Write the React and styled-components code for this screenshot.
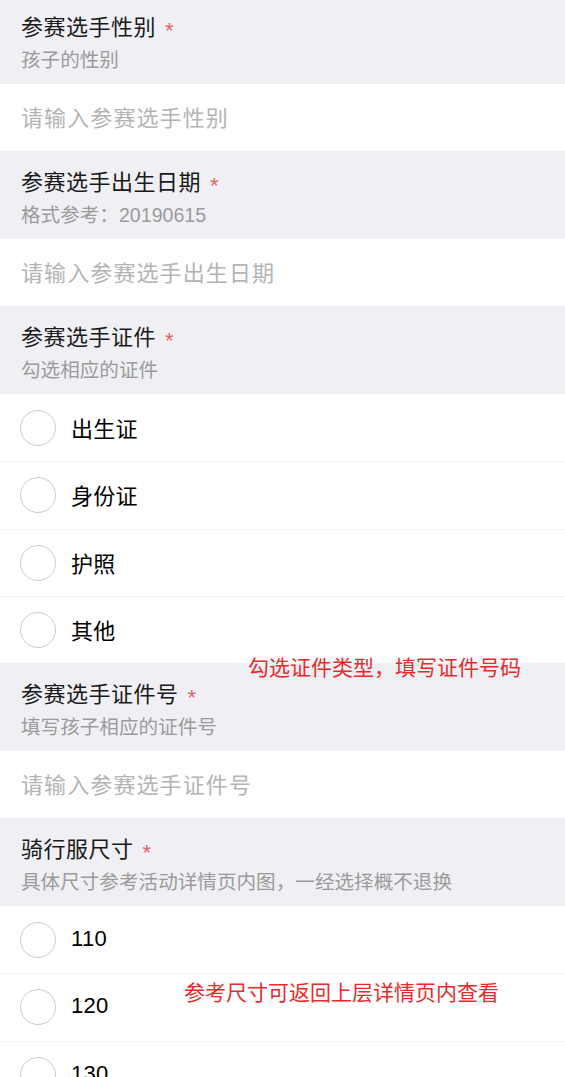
import React from "react";
import styled, { createGlobalStyle } from "styled-components";

const Global = createGlobalStyle`
  html, body {
    margin: 0;
    padding: 0;
    background: #ffffff;
    font-family: "Liberation Sans", "Noto Sans CJK SC", sans-serif;
    overflow: hidden;
  }
`;

const Page = styled.div`
  position: relative;
  width: 565px;
  margin-top: -4px;
`;

const Section = styled.div`
  position: relative;
`;

const Header = styled.div`
  background: #efeff4;
  padding: 18px 21px 12px;
  display: flex;
  flex-direction: column;
  gap: 6px;
`;

const Title = styled.div`
  font-size: 22px;
  line-height: 28px;
  letter-spacing: 0.5px;
  color: #1a1a1a;
  display: flex;
  align-items: center;
  gap: 9px;
`;

const Star = styled.span`
  color: #e06464;
  font-size: 22px;
  line-height: 22px;
  padding-top: 6px;
`;

const Sub = styled.div`
  font-size: 19.6px;
  line-height: 24px;
  color: #9b9b9b;
`;

const Input = styled.div`
  height: 67px;
  box-sizing: border-box;
  display: flex;
  align-items: center;
  padding: 0 21px 3px;
  font-size: 22px;
  letter-spacing: 1.1px;
  color: #b4b4b4;
  background: #fff;
`;

const Option = styled.div`
  height: 67.25px;
  box-sizing: border-box;
  display: flex;
  align-items: center;
  padding: 0 20px 2px;
  gap: 15px;
  background: #fff;
  border-top: ${(p) => (p.$first ? "none" : "1px solid #f3f3f3")};
  font-size: 22px;
  letter-spacing: 0.3px;
  color: #000;
`;

const Circle = styled.span`
  width: 34px;
  height: 34px;
  border-radius: 50%;
  border: 1px solid #cccccc;
  flex-shrink: 0;
  margin-top: 2px;
`;

const Note = styled.div`
  position: absolute;
  left: ${(p) => p.$left}px;
  top: ${(p) => p.$top}px;
  font-size: 21px;
  line-height: 24px;
  color: #ea2a2a;
  white-space: nowrap;
`;

const sections = [
  { title: "参赛选手性别", sub: "孩子的性别", input: "请输入参赛选手性别" },
  { title: "参赛选手出生日期", sub: "格式参考：20190615", input: "请输入参赛选手出生日期" },
  { title: "参赛选手证件", sub: "勾选相应的证件", options: ["出生证", "身份证", "护照", "其他"] },
  {
    title: "参赛选手证件号",
    sub: "填写孩子相应的证件号",
    input: "请输入参赛选手证件号",
    note: { text: "勾选证件类型，填写证件号码", left: 248, top: -7 },
  },
  {
    title: "骑行服尺寸",
    sub: "具体尺寸参考活动详情页内图，一经选择概不退换",
    options: ["110", "120", "130"],
    note: { text: "参考尺寸可返回上层详情页内查看", left: 184, top: 163 },
  },
];

export default function App() {
  return (
    <Page>
      <Global />
      {sections.map((s) => (
        <Section key={s.title}>
          <Header>
            <Title>
              {s.title}
              <Star>*</Star>
            </Title>
            <Sub>{s.sub}</Sub>
          </Header>
          {s.input && <Input>{s.input}</Input>}
          {s.options &&
            s.options.map((o, i) => (
              <Option key={o} $first={i === 0}>
                <Circle />
                {o}
              </Option>
            ))}
          {s.note && (
            <Note $left={s.note.left} $top={s.note.top}>
              {s.note.text}
            </Note>
          )}
        </Section>
      ))}
    </Page>
  );
}
